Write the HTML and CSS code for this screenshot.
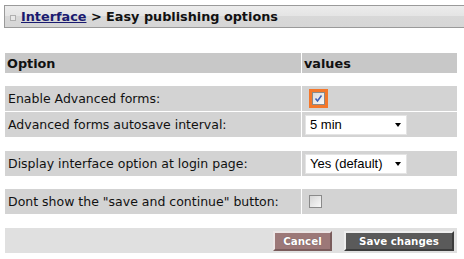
FILE: index.html
```html
<!DOCTYPE html>
<html>
<head>
<meta charset="utf-8">
<link rel="stylesheet" href="styles.css">
</head>
<body>
<div class="titlebar">
  <span class="title-icon"></span>
  <h1 class="title"><a href="#">Interface</a> &gt; Easy publishing options</h1>
</div>

<div class="options">
  <div class="row head">
    <div class="cell">Option</div>
    <div class="cell">values</div>
  </div>

  <div class="group">
    <div class="row">
      <div class="cell">Enable Advanced forms:</div>
      <div class="cell"><span class="check checked focused"><svg width="13" height="13" viewBox="0 0 13 13"><defs><linearGradient id="cb" x1="0" y1="0" x2="1" y2="1"><stop offset="0" stop-color="#d8d8d8"/><stop offset="1" stop-color="#fbfbfb"/></linearGradient></defs><rect x="0.5" y="0.5" width="12" height="12" fill="url(#cb)" stroke="#8a8a8a"/><path d="M3.5 6.5 L5.5 9 L9.5 3.5" fill="none" stroke="#3a5cb8" stroke-width="1.5"/></svg></span></div>
    </div>
    <div class="row">
      <div class="cell">Advanced forms autosave interval:</div>
      <div class="cell"><div class="select"><span>5 min</span><i class="arrow"></i></div></div>
    </div>
  </div>

  <div class="row">
    <div class="cell">Display interface option at login page:</div>
    <div class="cell"><div class="select"><span>Yes (default)</span><i class="arrow"></i></div></div>
  </div>

  <div class="row">
    <div class="cell">Dont show the "save and continue" button:</div>
    <div class="cell"><span class="check"><svg width="13" height="13" viewBox="0 0 13 13"><defs><linearGradient id="cb2" x1="0" y1="0" x2="1" y2="1"><stop offset="0" stop-color="#d4d4d4"/><stop offset="1" stop-color="#fafafa"/></linearGradient></defs><rect x="0.5" y="0.5" width="12" height="12" fill="url(#cb2)" stroke="#8a8a8a"/></svg></span></div>
  </div>

  <div class="actions">
    <button class="btn cancel">Cancel</button>
    <button class="btn save">Save changes</button>
  </div>
</div>
</body>
</html>
```

FILE: styles.css
```css
html, body {
  margin: 0;
  padding: 0;
  background: #fff;
}
body {
  font-family: "DejaVu Sans", Verdana, sans-serif;
  color: #111;
}

.titlebar {
  box-sizing: border-box;
  margin: 5px 0 0 4px;
  height: 23px;
  border: 1px solid #9a9a9a;
  border-right: 0;
  background: linear-gradient(#ececec 0%, #e4e4e4 50%, #d8d8d8 50%, #d6d6d6 100%);
  display: flex;
  align-items: center;
  padding-left: 5px;
}
.title-icon {
  box-sizing: border-box;
  width: 6px;
  height: 6px;
  border: 1px solid #b0b0b0;
  background: #e8e8e8;
  margin-top: 2px;
  margin-right: 5px;
}
.title {
  margin: 0;
  font-size: 12.8px;
  font-weight: bold;
  color: #111;
  white-space: nowrap;
}
.title a {
  color: #1a1a70;
  text-decoration: underline;
}

.options {
  width: 452px;
  margin: 25px 0 0 5px;
  display: flex;
  flex-direction: column;
}
.row {
  display: grid;
  grid-template-columns: 296px 155px;
  column-gap: 1px;
  height: 25px;
  margin-top: 13px;
}
.row.head {
  height: 20px;
  margin-top: 0;
  font-weight: bold;
}
.row.head .cell {
  background: #c8c8c8;
  font-size: 12.8px;
  padding-left: 2px;
}
.group {
  display: flex;
  flex-direction: column;
  gap: 1px;
  margin-top: 13px;
}
.group .row {
  margin-top: 0;
}
.group + .row {
  margin-top: 14px;
}
.cell {
  background: #d3d3d3;
  display: flex;
  align-items: center;
  padding-left: 3px;
  font-size: 12.5px;
  white-space: nowrap;
  overflow: hidden;
}

.check {
  display: inline-flex;
  margin-left: 4px;
  width: 13px;
  height: 13px;
}
.check svg { display: block; }
.check.focused {
  margin-left: 7px;
  outline: 3px solid #f4772a;
}

.select {
  box-sizing: border-box;
  width: 102px;
  height: 20px;
  background: #fff;
  border: 1px solid #e4e4e4;
  display: flex;
  align-items: center;
  justify-content: space-between;
  padding: 0 5px 0 4px;
  font-family: "Liberation Sans", Arial, sans-serif;
  font-size: 13px;
  color: #000;
}
.arrow {
  width: 0;
  height: 0;
  border-left: 3px solid transparent;
  border-right: 3px solid transparent;
  border-top: 4px solid #000;
  margin-top: 1px;
}

.actions {
  margin-top: 14px;
  height: 25px;
  background: #e0e0e0;
  display: flex;
  justify-content: flex-end;
  align-items: flex-start;
  gap: 12px;
  padding: 3px 3px 0 0;
  box-sizing: border-box;
}
.btn {
  box-sizing: border-box;
  height: 20px;
  margin: 0;
  padding: 0;
  border: 2px solid;
  color: #fff;
  font-family: "DejaVu Sans", Verdana, sans-serif;
  font-weight: bold;
  font-size: 10.3px;
  text-shadow: 0 0 1px rgba(0,0,0,0.4);
  cursor: pointer;
}
.btn.cancel {
  width: 59px;
  background: #9c7878;
  border-color: #ece6e6 #7a5c5c #7a5c5c #ece6e6;
}
.btn.save {
  width: 110px;
  background: #5a5a5a;
  border-color: #eeeeee #3c3c3c #3c3c3c #eeeeee;
}
```
